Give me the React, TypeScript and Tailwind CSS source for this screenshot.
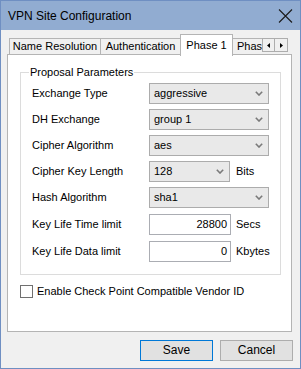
import React from 'react';

const font = { fontFamily: '"Liberation Sans", Arial, sans-serif' };

function Chevron() {
  return (
    <svg width="8" height="5" viewBox="0 0 8 5" className="shrink-0">
      <path d="M0.8 0.8 L4 4 L7.2 0.8" fill="none" stroke="#7a7a7a" strokeWidth="1.6" />
    </svg>
  );
}

function Combo({ value, width }: { value: string; width: string }) {
  return (
    <div className={`${width} h-[21px] flex items-center justify-between border border-[#acacac] bg-[#e9e9e9] pl-[4px] pr-[5px]`}>
      <span>{value}</span>
      <Chevron />
    </div>
  );
}

function NumBox({ value }: { value: string }) {
  return (
    <div className="w-[82px] h-[21px] flex items-center justify-end border border-[#abadb3] bg-white pr-[3px]">
      {value}
    </div>
  );
}

const rows = [
  { label: 'Exchange Type', value: 'aggressive' },
  { label: 'DH Exchange', value: 'group 1' },
  { label: 'Cipher Algorithm', value: 'aes' },
];

export default function App() {
  return (
    <div
      className="w-[301px] h-[369px] overflow-hidden flex flex-col border border-[#6f8fc2] bg-[#f0f0f0] text-[11px] text-black leading-[13px]"
      style={font}
    >
      {/* title bar */}
      <div className="h-[29px] shrink-0 flex items-center justify-between bg-[#91acd1] pl-[7px] pr-[7px]">
        <span className="text-[12px] leading-[14px]">VPN Site Configuration</span>
        <svg width="15" height="14" viewBox="0 0 15 14">
          <path d="M1 0.5 L14 13.5 M14 0.5 L1 13.5" stroke="#1b1b1b" strokeWidth="1.1" />
        </svg>
      </div>

      <div className="pl-[6px] pt-[4px]">
        {/* tab strip */}
        <div className="flex items-end h-[20px] pl-[2px]">
          <div className="w-[92px] h-[16px] flex items-center justify-center border border-b-0 border-[#b4b4b4] bg-[#f0f0f0]">
            Name Resolution
          </div>
          <div className="w-[80px] h-[16px] flex items-center justify-center border border-l-0 border-b-0 border-[#b4b4b4] bg-[#f0f0f0]">
            Authentication
          </div>
          <div className="relative z-10 -ml-px -mb-[2px] w-[53px] h-[22px] flex items-start justify-center pt-[4px] border border-b-0 border-[#b4b4b4] bg-white">
            Phase 1
          </div>
          <div className="w-[29px] h-[16px] flex items-center overflow-hidden whitespace-nowrap pl-[4px] border-t border-[#b4b4b4] bg-[#f0f0f0]">
            Phase 2
          </div>
          <div className="self-start mt-[4px] flex">
            <div className="w-[13px] h-[14px] flex items-center justify-center border border-[#adadad] bg-[#f0f0f0]">
              <svg width="3" height="5" viewBox="0 0 3 5"><path d="M3 0 L0 2.5 L3 5 Z" fill="#000" /></svg>
            </div>
            <div className="w-[13px] h-[14px] flex items-center justify-center border border-l-0 border-[#adadad] bg-[#f0f0f0]">
              <svg width="3" height="5" viewBox="0 0 3 5"><path d="M0 0 L3 2.5 L0 5 Z" fill="#000" /></svg>
            </div>
          </div>
        </div>

        {/* tab page */}
        <div className="w-[285px] h-[278px] border border-[#b4b4b4] bg-white pl-[12px] pt-[11px]">
          <fieldset className="w-[261px] border border-[#dcdcdc] pt-[4px] pb-[12px]">
            <legend className="ml-[8px] px-[1px] leading-[13px]">Proposal Parameters</legend>
            <div className="flex flex-col gap-[5px] pl-[11px]">
              {rows.map((r) => (
                <div key={r.label} className="flex items-center h-[21px]">
                  <span className="w-[117px]">{r.label}</span>
                  <Combo value={r.value} width="w-[120px]" />
                </div>
              ))}
              <div className="flex items-center h-[21px]">
                <span className="w-[117px]">Cipher Key Length</span>
                <Combo value="128" width="w-[81px]" />
                <span className="ml-[6px]">Bits</span>
              </div>
              <div className="flex items-center h-[21px]">
                <span className="w-[117px]">Hash Algorithm</span>
                <Combo value="sha1" width="w-[120px]" />
              </div>
              <div className="flex items-center h-[21px] mt-[1px]">
                <span className="w-[117px]">Key Life Time limit</span>
                <NumBox value="28800" />
                <span className="ml-[5px]">Secs</span>
              </div>
              <div className="flex items-center h-[21px] mt-[1px]">
                <span className="w-[117px]">Key Life Data limit</span>
                <NumBox value="0" />
                <span className="ml-[5px]">Kbytes</span>
              </div>
            </div>
          </fieldset>

          <label className="flex items-center mt-[10px]">
            <span className="w-[13px] h-[13px] border border-[#707070] bg-white" />
            <span className="ml-[4px]">Enable Check Point Compatible Vendor ID</span>
          </label>
        </div>

        {/* buttons */}
        <div className="flex justify-end gap-[7px] pr-[7px] mt-[8px]">
          <button className="w-[73px] h-[21px] border border-[#0078d7] bg-[#e1e1e1] text-[12px]">Save</button>
          <button className="w-[73px] h-[21px] border border-[#adadad] bg-[#e1e1e1] text-[12px]">Cancel</button>
        </div>
      </div>
    </div>
  );
}
